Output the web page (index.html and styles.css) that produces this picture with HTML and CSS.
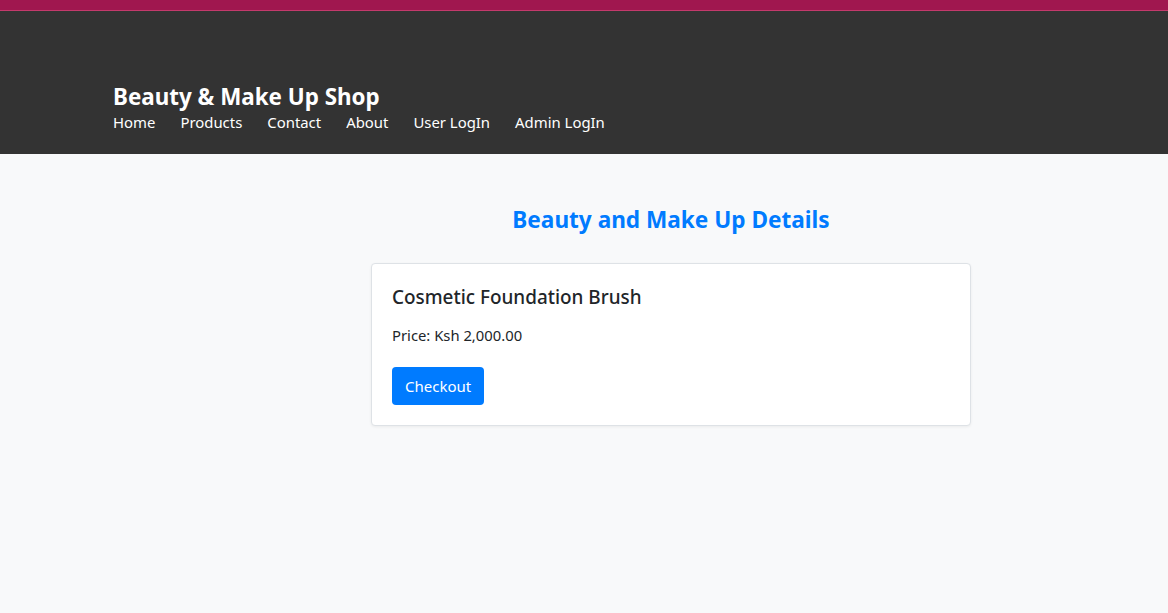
FILE: index.html
```html
<!DOCTYPE html>
<html lang="en">
<head>
<meta charset="utf-8">
<title>Beauty & Make Up Shop</title>
<link rel="stylesheet" href="styles.css">
</head>
<body>
<div class="topbar"></div>
<header class="site-header">
  <div class="brand">Beauty &amp; Make Up Shop</div>
  <nav class="nav">
    <a href="#">Home</a>
    <a href="#">Products</a>
    <a href="#">Contact</a>
    <a href="#">About</a>
    <a href="#">User LogIn</a>
    <a href="#">Admin LogIn</a>
  </nav>
</header>
<main class="main">
  <h2 class="page-title">Beauty and Make Up Details</h2>
  <div class="card">
    <h5 class="card-title">Cosmetic Foundation Brush</h5>
    <p class="card-text">Price: Ksh 2,000.00</p>
    <a href="#" class="btn">Checkout</a>
  </div>
</main>
</body>
</html>
```
FILE: styles.css
```css
html, body {
  margin: 0;
  padding: 0;
}
body {
  background: #f8f9fa;
  font-family: "Noto Sans", "Open Sans", sans-serif;
  color: #212529;
  min-height: 613px;
}
.topbar {
  height: 10px;
  background: #a0174f;
  border-bottom: 1px solid #c43a6c;
}
.site-header {
  background: #333333;
  padding: 72px 113px 20px;
  color: #fff;
}
.brand {
  font-size: 22.4px;
  font-weight: 700;
  line-height: 27px;
}
.nav {
  display: flex;
  gap: 25px;
  line-height: 24px;
}
.nav a {
  color: #fff;
  text-decoration: none;
  font-size: 14.9px;
}
.main {
  padding-left: 174px;
  display: flex;
  flex-direction: column;
  align-items: center;
}
.page-title {
  margin: 51px 0 29px;
  font-size: 22.6px;
  line-height: 29px;
  font-weight: 700;
  color: #007bff;
}
.card {
  width: 558px;
  background: #fff;
  border: 1px solid #dee2e6;
  border-radius: 4px;
  box-shadow: 0 1px 3px rgba(0,0,0,0.06);
  padding: 21px 20px 20px;
}
.card-title {
  margin: 0 0 13px;
  font-size: 18.9px;
  font-weight: 500;
  line-height: 25px;
}
.card-text {
  margin: 0 0 20px;
  font-size: 14.8px;
  line-height: 24px;
}
.btn {
  display: inline-block;
  background: #007bff;
  color: #fff;
  text-decoration: none;
  font-size: 15px;
  line-height: 24px;
  padding: 7px 13px;
  border-radius: 4px;
}
```
